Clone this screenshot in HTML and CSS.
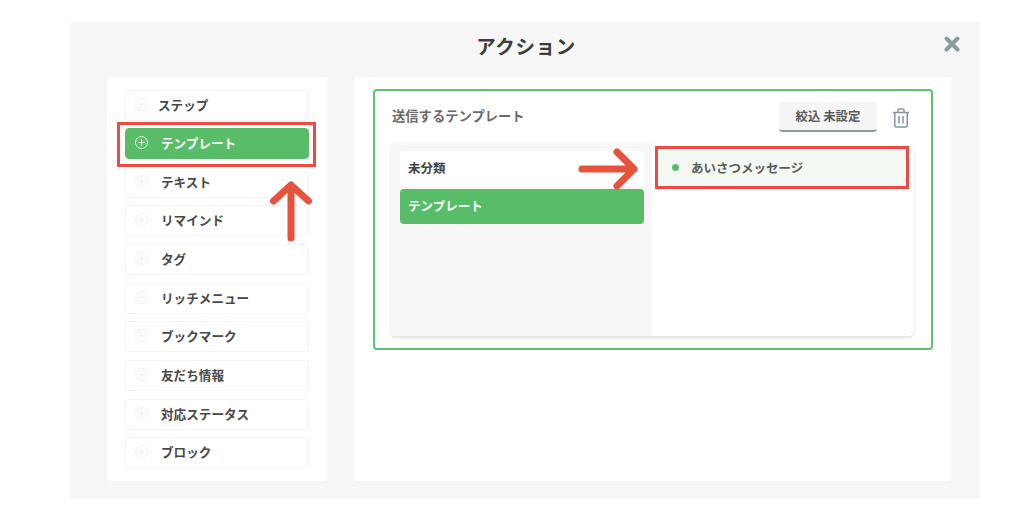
FILE: index.html
```html
<!DOCTYPE html>
<html>
<head>
    <meta charset="utf-8">
    <title>アクション</title>
    <link rel="stylesheet" href="styles.css">
</head>
<body>
    <div class="modal">
        <div class="modal-head">
            <h1 class="modal-title">アクション</h1>
            <svg class="close" width="18" height="18" viewBox="0 0 18 18">
                <path d="M3.5 3.5 L14.5 14.5 M14.5 3.5 L3.5 14.5" stroke="#8a9a9e" stroke-width="4" stroke-linecap="round"/>
            </svg>
        </div>
        <div class="modal-body">
            <div class="side">
                <div class="side-item"><span class="plus"></span><span class="label-step">ステップ</span></div>
                <div class="side-item active"><span class="plus"></span><span>テンプレート</span></div>
                <div class="side-item"><span class="plus"></span><span>テキスト</span></div>
                <div class="side-item"><span class="plus"></span><span>リマインド</span></div>
                <div class="side-item"><span class="plus"></span><span>タグ</span></div>
                <div class="side-item"><span class="plus"></span><span>リッチメニュー</span></div>
                <div class="side-item"><span class="plus"></span><span>ブックマーク</span></div>
                <div class="side-item"><span class="plus"></span><span>友だち情報</span></div>
                <div class="side-item"><span class="plus"></span><span>対応ステータス</span></div>
                <div class="side-item"><span class="plus"></span><span>ブロック</span></div>
            </div>
            <div class="main">
                <div class="action-box">
                    <div class="action-head">
                        <span class="action-title">送信するテンプレート</span>
                        <button class="filter">絞込 未設定</button>
                        <svg class="trash" width="18" height="20" viewBox="0 0 18 20" fill="none" stroke="#84979b" stroke-width="1.5">
                            <path d="M1 4.5 H17 M6 4.5 V2 Q6 1 7 1 H11 Q12 1 12 2 V4.5"/>
                            <path d="M2.8 4.5 V17.5 Q2.8 19 4.3 19 H13.7 Q15.2 19 15.2 17.5 V4.5"/>
                            <path d="M7 8 V15.5 M11 8 V15.5"/>
                        </svg>
                    </div>
                    <div class="picker">
                        <div class="folders">
                            <div class="folder">未分類</div>
                            <div class="folder active">テンプレート</div>
                        </div>
                        <div class="templates">
                            <div class="template"><span class="dot"></span>あいさつメッセージ</div>
                        </div>
                    </div>
                </div>
            </div>
        </div>
    </div>

    <!-- annotations on top of the screenshot -->
    <div class="mark mark-side"></div>
    <div class="mark mark-template"></div>
    <svg class="arrow arrow-up" width="44" height="66" viewBox="0 0 44 66" fill="none" stroke="#e5533d" stroke-width="7" stroke-linecap="round" stroke-linejoin="round">
        <path d="M21 58 V5 M3.5 21 L21 5 L38.5 21"/>
    </svg>
    <svg class="arrow arrow-right" width="66" height="44" viewBox="0 0 66 44" fill="none" stroke="#e5533d" stroke-width="7" stroke-linecap="round" stroke-linejoin="round">
        <path d="M6 21 H58 M41 4 L58 21 L41 38"/>
    </svg>
</body>
</html>
```

FILE: styles.css
```css
* {
    box-sizing: border-box;
}

body {
    margin: 0;
    height: 516px;
    overflow: hidden;
    padding: 22px 44px 17px 70px;
    background: #fff;
    font-family: "Noto Sans CJK JP", "Noto Sans", sans-serif;
    color: #444;
}

.modal {
    height: 477px;
    background: #f6f6f6;
    padding: 0 29px 18px 37px;
}

.modal-head {
    height: 55px;
    display: flex;
    align-items: center;
    justify-content: center;
}

.modal-title {
    margin: 0 6px 8px 0;
    font-size: 19.5px;
    line-height: 1;
    font-weight: 700;
    color: #3c3c3c;
    letter-spacing: 0.6px;
}

.close {
    position: absolute;
    left: 943px;
    top: 35px;
}

.modal-body {
    display: flex;
    gap: 27px;
    height: 404px;
}

.side {
    width: 220px;
    background: #fff;
    border-radius: 4px;
    padding: 12.5px 18px;
    display: flex;
    flex-direction: column;
    gap: 7.65px;
}

.side-item {
    height: 31px;
    flex: none;
    display: flex;
    align-items: center;
    padding: 0 0 2px 9px;
    gap: 13px;
    border: 1.5px solid #f3f3f3;
    border-radius: 4px;
    font-size: 12.6px;
    font-weight: 700;
    color: #484848;
}

.side-item .label-step {
    margin-left: -3px;
}

.side-item.active {
    background: #58bc69;
    border-color: #58bc69;
    color: #fff;
}

.plus {
    position: relative;
    flex: none;
    width: 13px;
    height: 13px;
    border: 1px solid #f0f0f0;
    border-radius: 50%;
}

.plus::before,
.plus::after {
    content: "";
    position: absolute;
    background: #f0f0f0;
}

.plus::before {
    left: 2px;
    top: 5px;
    width: 7px;
    height: 1px;
}

.plus::after {
    left: 5px;
    top: 2px;
    width: 1px;
    height: 7px;
}

.active .plus {
    border-color: #e6f5e8;
}

.active .plus::before,
.active .plus::after {
    background: #e6f5e8;
}

.main {
    width: 597px;
    background: #fff;
    border-radius: 4px;
    padding: 12px 18px 0 19px;
}

.action-box {
    height: 261px;
    border: 2px solid #5fc370;
    border-radius: 4px;
    padding: 10px 17px 0 15px;
}

.action-head {
    height: 33px;
    display: flex;
    align-items: center;
    gap: 15px;
    padding-right: 4px;
}

.action-title {
    flex: 1;
    padding: 0 0 5px 2px;
    font-size: 13.3px;
    font-weight: 700;
    color: #6a6a6a;
}

.filter {
    width: 98px;
    height: 30px;
    margin-bottom: 2px;
    border: 0;
    border-bottom: 2px solid #8f9a9c;
    border-radius: 4px;
    background: #f5f5f5;
    font-family: inherit;
    font-size: 12.4px;
    font-weight: 700;
    color: #5a5a5a;
    padding: 0;
}

.trash {
    flex: none;
}

.picker {
    display: flex;
    height: 193px;
    margin-top: 9px;
    background: #fff;
    border-radius: 5px;
    box-shadow: 0 2px 3px rgba(0, 0, 0, 0.13);
    overflow: hidden;
}

.folders {
    width: 262px;
    background: #f7f7f7;
    padding: 8px 8px 0 10px;
    display: flex;
    flex-direction: column;
    gap: 3.5px;
}

.folder {
    height: 34.5px;
    display: flex;
    align-items: center;
    padding: 0 0 2px 8px;
    background: #fff;
    border-radius: 4px;
    font-size: 12.5px;
    font-weight: 700;
    color: #3f3f3f;
}

.folder.active {
    background: #58bc69;
    color: #fff;
}

.templates {
    flex: 1;
    padding: 5px 6px 0 5px;
}

.template {
    height: 40px;
    display: flex;
    align-items: center;
    padding: 0 0 2px 15px;
    background: #f4f9f3;
    font-size: 12.5px;
    font-weight: 700;
    color: #5a5a5a;
}

.dot {
    width: 7px;
    height: 7px;
    margin-right: 12px;
    border-radius: 50%;
    background: #58bc69;
}

.mark {
    position: absolute;
    border: 3px solid #ed4a45;
}

.mark-side {
    left: 117px;
    top: 122px;
    width: 199px;
    height: 45px;
}

.mark-template {
    left: 655px;
    top: 146px;
    width: 254px;
    height: 43px;
}

.arrow {
    position: absolute;
}

.arrow-up {
    left: 270px;
    top: 180px;
}

.arrow-right {
    left: 576px;
    top: 148px;
}
```
